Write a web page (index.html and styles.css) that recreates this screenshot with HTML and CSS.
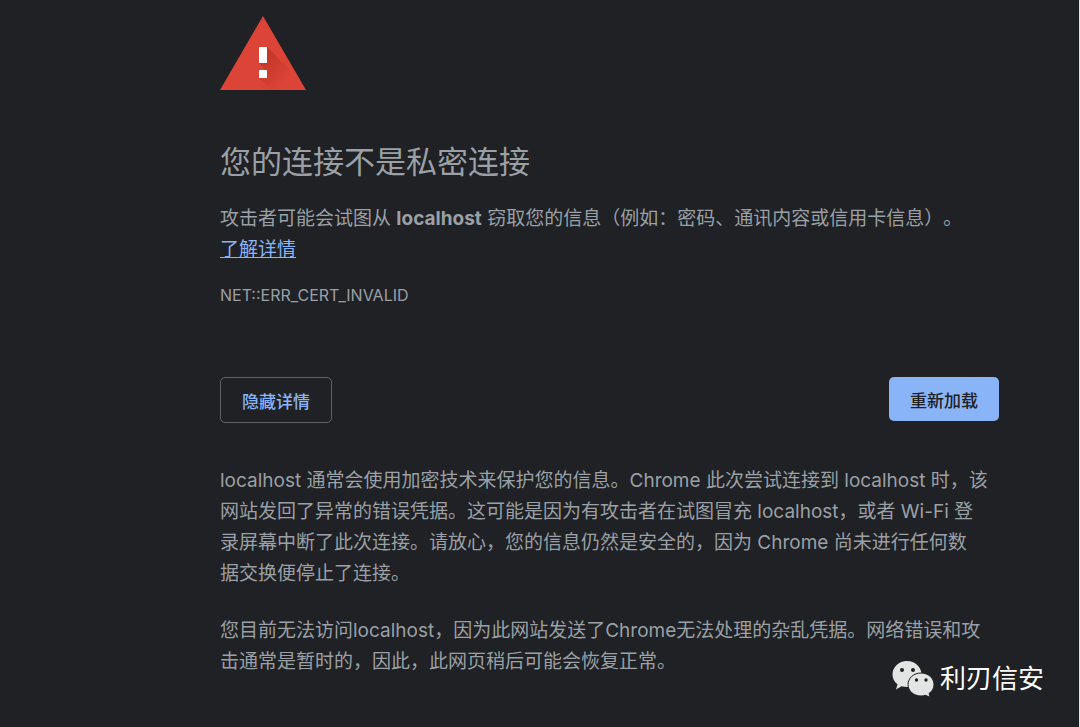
FILE: index.html
```
<!DOCTYPE html>
<html lang="zh-CN">
<head>
  <meta charset="UTF-8">
  <meta name="viewport" content="width=device-width, initial-scale=1.0">
  <title>隐私设置错误</title>
  <link rel="stylesheet" href="styles.css">
</head>
<body>

  <main class="interstitial">
    <svg class="warning-icon" viewBox="0 0 86 75" aria-hidden="true">
      <defs>
        <linearGradient id="shade" gradientUnits="userSpaceOnUse" x1="43" y1="40" x2="66" y2="63">
          <stop offset="0" stop-color="#a52714" stop-opacity=".5"/>
          <stop offset="1" stop-color="#a52714" stop-opacity="0"/>
        </linearGradient>
      </defs>
      <path d="M43 0L86 74H0z" fill="#db4437"/>
      <path d="M47 31L77 61L85 74H51L39 62H47V55L39 47H47z" fill="url(#shade)"/>
      <path d="M39 31h8v16h-8zM39 54h8v8h-8z" fill="#fff"/>
    </svg>

    <h1>您的连接不是私密连接</h1>
    <p>攻击者可能会试图从 <strong>localhost</strong> 窃取您的信息（例如：密码、通讯内容或信用卡信息）。<br><a href="#details">了解详情</a></p>
    <div class="error-code">NET::ERR_CERT_INVALID</div>

    <div class="buttons">
      <button type="button" class="secondary">隐藏详情</button>
      <button type="button" class="primary">重新加载</button>
    </div>

    <div class="details" id="details">
      <p>localhost 通常会使用加密技术来保护您的信息。Chrome 此次尝试连接到 localhost 时，该<br>网站发回了异常的错误凭据。这可能是因为有攻击者在试图冒充 localhost，或者 Wi-Fi 登<br>录屏幕中断了此次连接。请放心，您的信息仍然是安全的，因为 Chrome 尚未进行任何数<br>据交换便停止了连接。</p>
      <p>您目前无法访问localhost，因为此网站发送了Chrome无法处理的杂乱凭据。网络错误和攻<br>击通常是暂时的，因此，此网页稍后可能会恢复正常。</p>
    </div>
  </main>

  <div class="watermark">
    <svg class="wechat-icon" viewBox="0 0 42 36" aria-hidden="true">
      <path d="M15 0C7 0 .5 6 .5 13.500c0 4.200 2 7.500 5 9.800L4 28.500l5.500-3.300c1.700.5 3.500.8 5.500.8 8 0 14.500-5.500 14.500-12.700S23 0 15 0z"/>
      <path class="bubble-front" d="M29 12c-7.200 0-13 5-13 11.500S21.800 35 29 35c1.600 0 3-.2 4.400-.7l4.800 2-1.200-3.800c3-2 5-5 5-9C42 17 36.200 12 29 12z"/>
      <circle class="eye" cx="10" cy="9" r="2"/>
      <circle class="eye" cx="21" cy="9" r="2"/>
      <circle class="eye" cx="24.500" cy="19" r="1.700"/>
      <circle class="eye" cx="34" cy="19" r="1.700"/>
    </svg>
    <span>利刃信安</span>
  </div>

</body>
</html>
```
FILE: styles.css
```
* {
  box-sizing: border-box;
}
html {
  background-color: #202124;
}
body {
  margin: 0;
  min-height: 100vh;
  border-right: 1px solid #e4e4e6;
  color: #9aa0a6;
  font-family: Inter, "Noto Sans CJK SC", sans-serif;
  font-size: 19px;
  line-height: 31px;
  text-spacing-trim: space-all;
}
.interstitial {
  padding: 16px 80px 40px 220px;
}
.warning-icon {
  display: block;
  width: 86px;
  height: 75px;
}
h1 {
  margin: 51px 0 21px;
  font-size: 31px;
  font-weight: 400;
  line-height: 40px;
}
p {
  margin: 0;
  white-space: nowrap;
}
a {
  color: #8ab4f8;
}
.error-code {
  margin-top: 18px;
  font-size: 16px;
  line-height: 24px;
}
.buttons {
  display: flex;
  justify-content: space-between;
  align-items: flex-start;
  margin-top: 70px;
}
button {
  height: 44px;
  padding: 0 21px;
  border: 0;
  border-radius: 5px;
  font-family: inherit;
  font-size: 17px;
  font-weight: 500;
  cursor: pointer;
}
.primary {
  background-color: #8ab4f8;
  color: #202124;
}
.secondary {
  height: 46px;
  border: 1px solid #5f6368;
  background-color: transparent;
  color: #8ab4f8;
}
.details {
  display: flex;
  flex-direction: column;
  gap: 26px;
  margin-top: 42px;
}
.watermark {
  position: absolute;
  right: 36px;
  bottom: 28px;
  display: flex;
  align-items: center;
  gap: 6px;
  color: #fff;
  font-size: 26px;
  line-height: 40px;
}
.wechat-icon {
  width: 42px;
  height: 36px;
  overflow: visible;
  fill: #e3e5e4;
}
.bubble-front {
  stroke: #202124;
  stroke-width: 1;
}
.eye {
  fill: #202124;
}
```
